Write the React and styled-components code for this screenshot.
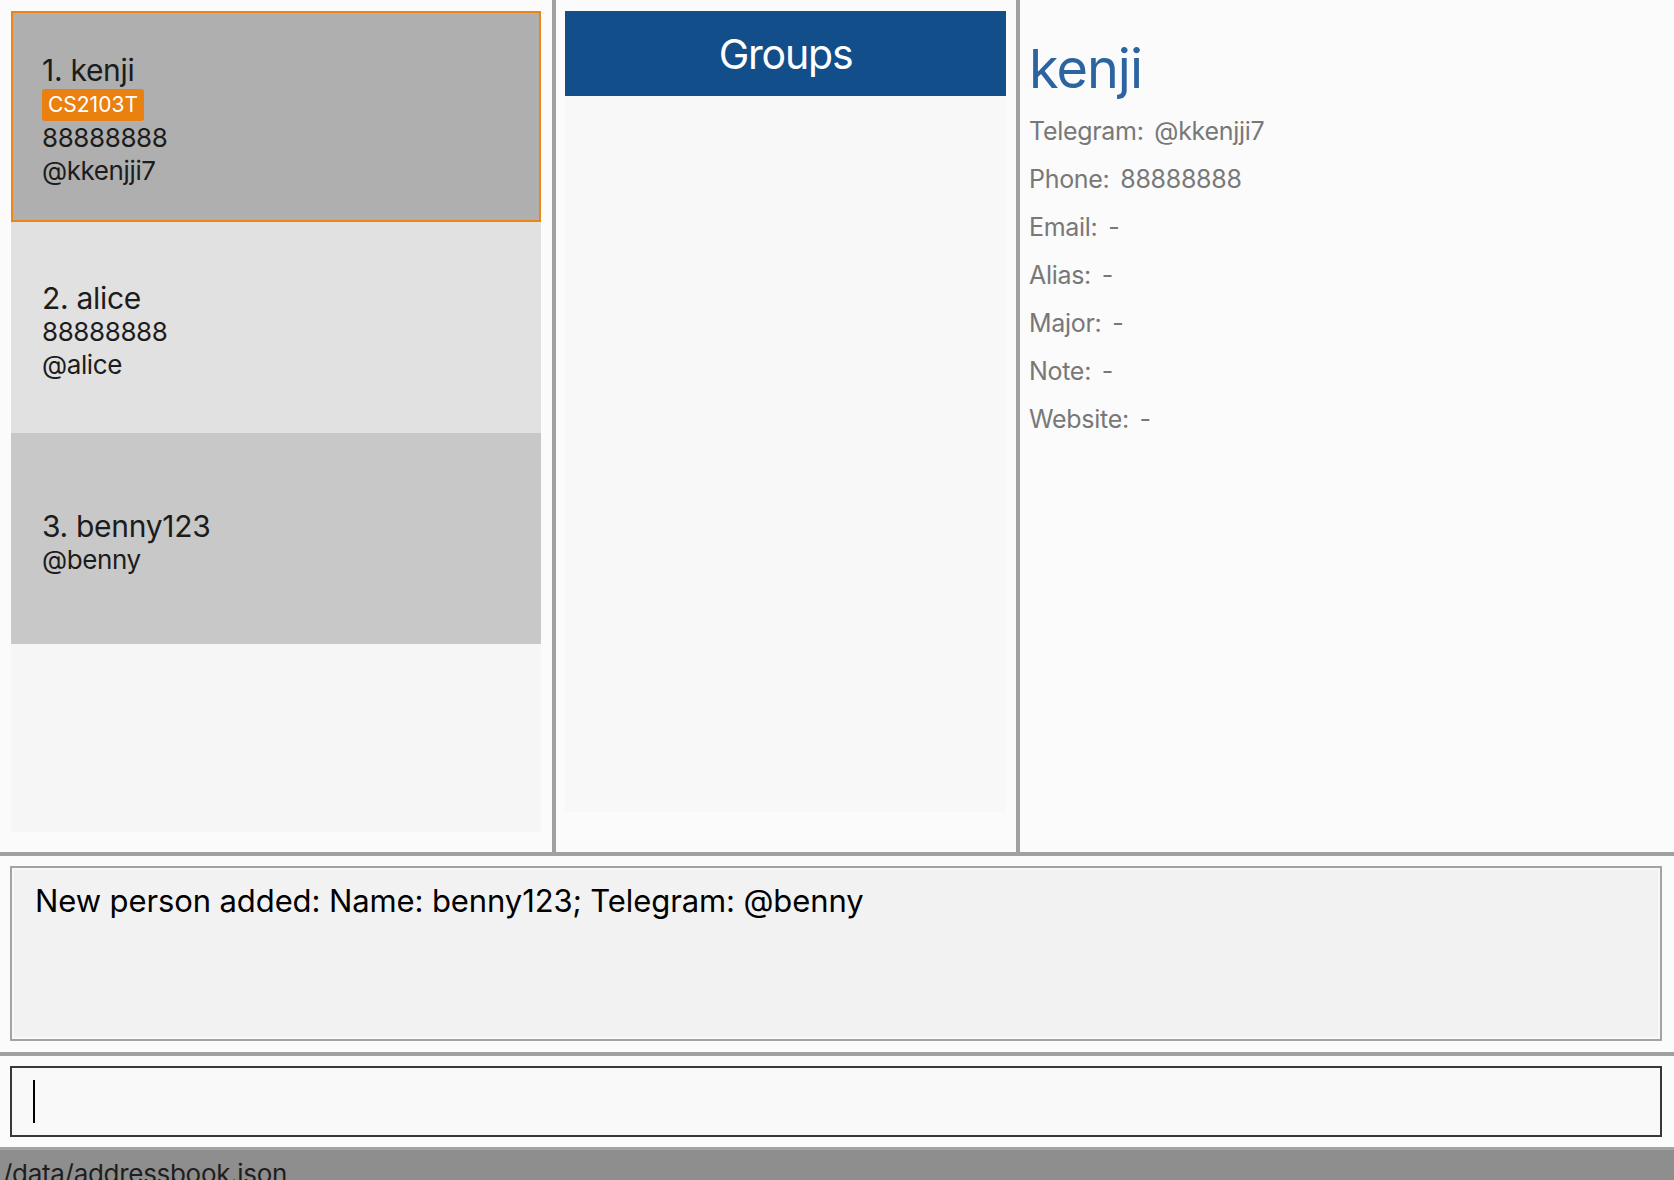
import React from "react";
import styled, { createGlobalStyle } from "styled-components";

const GlobalStyle = createGlobalStyle`
  html, body, #root {
    margin: 0;
    height: 100%;
    overflow: hidden;
  }
  body {
    background: #fbfbfb;
    font-family: Inter, "Open Sans", "Liberation Sans", sans-serif;
  }
  * {
    box-sizing: border-box;
  }
`;

const Window = styled.div`
  display: flex;
  flex-direction: column;
  width: 1674px;
  height: 1180px;
  background: #fbfbfb;
`;

// 위쪽 세 칸
const MainRow = styled.div`
  display: flex;
  height: 852px;
`;

const VDivider = styled.div`
  width: 4px;
  background: #a0a0a0;
`;

const HDivider = styled.div`
  height: 4px;
  background: #a0a0a0;
`;

// 사람 목록
const PersonPanel = styled.div`
  width: 552px;
  padding: 11px 11px 20px 11px;
`;

const PersonList = styled.div`
  height: 100%;
  background: #f6f6f6;
`;

const cardColors = ["#afafaf", "#e1e1e1", "#c8c8c8"];

const PersonCard = styled.div`
  display: flex;
  flex-direction: column;
  justify-content: center;
  height: 211px;
  padding: 7px 0 0 29px;
  background: ${(props) => cardColors[props.$index % 3]};
  border: 2px solid ${(props) => (props.$selected ? "#ef8412" : "transparent")};
  color: #1c1c1c;
`;

const PersonName = styled.div`
  font-size: 30px;
  line-height: 34px;
  letter-spacing: -0.3px;
`;

const TagRow = styled.div`
  display: flex;
  margin-top: 2px;
`;

const Tag = styled.span`
  height: 32px;
  padding: 0 6px;
  border-radius: 3px;
  background: #ea8010;
  color: #ffffff;
  font-size: 21px;
  line-height: 32px;
`;

const PersonLine = styled.div`
  font-size: 26px;
  line-height: 33px;
  letter-spacing: -0.4px;
`;

// 그룹 칸
const GroupPanel = styled.div`
  display: flex;
  flex-direction: column;
  width: 460px;
  padding: 11px 10px 40px 9px;
`;

const GroupHeader = styled.div`
  display: flex;
  align-items: center;
  justify-content: center;
  height: 85px;
  background: #114e8a;
  color: #ffffff;
  font-size: 41px;
  letter-spacing: -1.2px;
`;

const GroupList = styled.div`
  flex: 1;
  background: #f8f8f8;
`;

// 상세 정보
const DetailPanel = styled.div`
  flex: 1;
  padding: 36px 0 0 9px;
`;

const DetailName = styled.div`
  font-size: 54px;
  line-height: 66px;
  color: #2b64a0;
  letter-spacing: -1px;
  margin-bottom: 5px;
`;

const DetailRow = styled.div`
  font-size: 25px;
  line-height: 48px;
  color: #787878;
  letter-spacing: -0.3px;
`;

const DetailLabel = styled.span`
  margin-right: 4px;
`;

// 결과 표시
const ResultArea = styled.div`
  padding: 10px 12px 11px 10px;
`;

const ResultBox = styled.div`
  height: 175px;
  padding: 14px 23px;
  border: 2px solid #a3a3a3;
  box-shadow: inset 0 0 0 2px #f8f8f8;
  background: #f2f2f2;
  color: #000000;
  font-size: 31px;
  letter-spacing: -0.1px;
`;

const CommandArea = styled.div`
  padding: 10px 12px 10px 10px;
`;

const CommandBox = styled.div`
  height: 71px;
  padding: 12px 0 0 21px;
  border: 2px solid #383838;
  background: #f9f9f9;
`;

const Caret = styled.div`
  width: 2px;
  height: 43px;
  background: #000000;
`;

const StatusBar = styled.div`
  flex: 1;
  overflow: hidden;
  padding: 8px 0 0 3px;
  border-top: 3px solid #a3a3a3;
  background: #8e8e8e;
  color: #1e1e1e;
  font-size: 26px;
  letter-spacing: -0.3px;
  white-space: nowrap;
`;

const persons = [
  { name: "kenji", tags: ["CS2103T"], phone: "88888888", telegram: "@kkenjji7" },
  { name: "alice", tags: [], phone: "88888888", telegram: "@alice" },
  { name: "benny123", tags: [], phone: null, telegram: "@benny" },
];

const details = [
  ["Telegram", "@kkenjji7"],
  ["Phone", "88888888"],
  ["Email", "-"],
  ["Alias", "-"],
  ["Major", "-"],
  ["Note", "-"],
  ["Website", "-"],
];

const App = () => {
  return (
    <>
      <GlobalStyle />
      <Window>
        <MainRow>
          <PersonPanel>
            <PersonList>
              {persons.map((p, i) => (
                <PersonCard key={p.name} $index={i} $selected={i === 0}>
                  <PersonName>
                    {i + 1}. {p.name}
                  </PersonName>
                  {p.tags.length > 0 && (
                    <TagRow>
                      {p.tags.map((t) => (
                        <Tag key={t}>{t}</Tag>
                      ))}
                    </TagRow>
                  )}
                  {p.phone && <PersonLine>{p.phone}</PersonLine>}
                  <PersonLine>{p.telegram}</PersonLine>
                </PersonCard>
              ))}
            </PersonList>
          </PersonPanel>
          <VDivider />
          <GroupPanel>
            <GroupHeader>Groups</GroupHeader>
            <GroupList />
          </GroupPanel>
          <VDivider />
          <DetailPanel>
            <DetailName>kenji</DetailName>
            {details.map(([label, value]) => (
              <DetailRow key={label}>
                <DetailLabel>{label}:</DetailLabel> {value}
              </DetailRow>
            ))}
          </DetailPanel>
        </MainRow>
        <HDivider />
        <ResultArea>
          <ResultBox>New person added: Name: benny123; Telegram: @benny</ResultBox>
        </ResultArea>
        <HDivider />
        <CommandArea>
          <CommandBox>
            <Caret />
          </CommandBox>
        </CommandArea>
        <StatusBar>/data/addressbook.json</StatusBar>
      </Window>
    </>
  );
};

export default App;
